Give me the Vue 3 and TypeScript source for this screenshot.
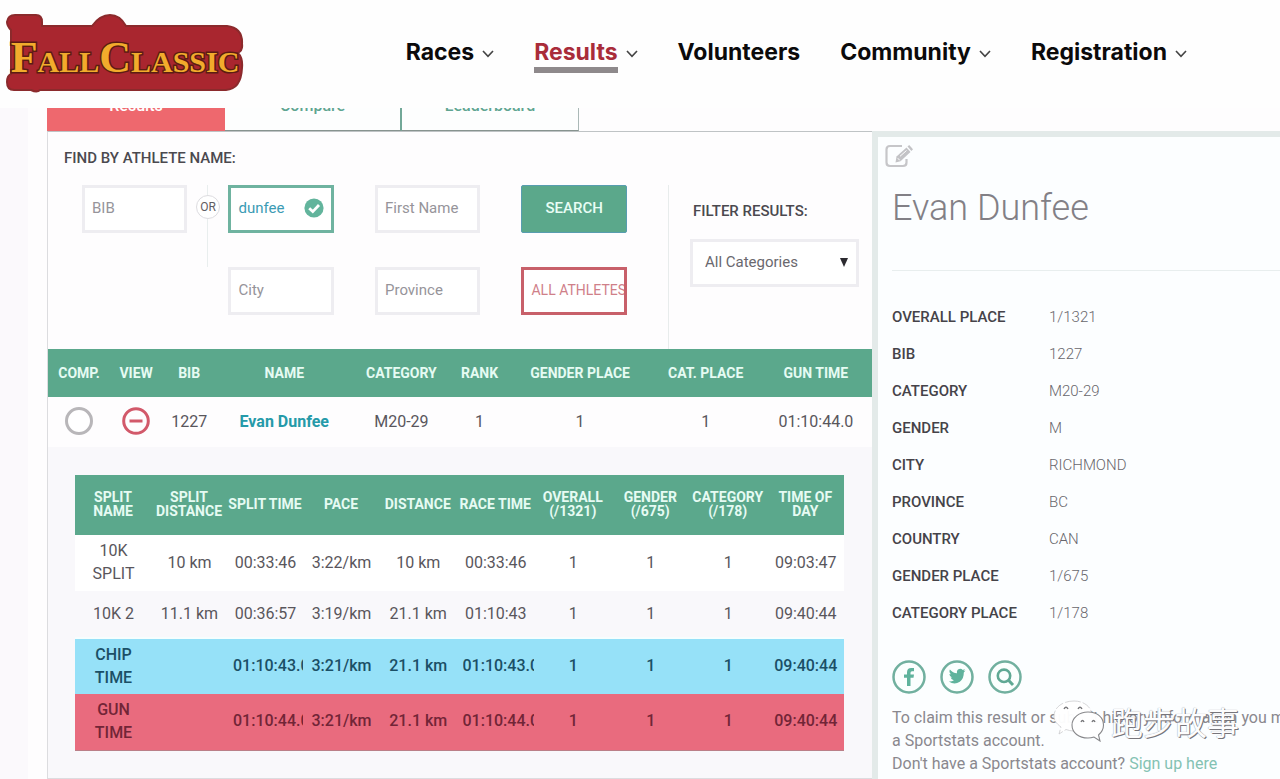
<script setup lang="ts">
import { ref } from 'vue'

interface NavItem { label: string; menu: boolean; active?: boolean }

const nav: NavItem[] = [
  { label: 'Races', menu: true },
  { label: 'Results', menu: true, active: true },
  { label: 'Volunteers', menu: false },
  { label: 'Community', menu: true },
  { label: 'Registration', menu: true },
]

const bib = ref('')
const lastName = ref('dunfee')
const firstName = ref('')
const city = ref('')
const province = ref('')
const category = ref('All Categories')
const compared = ref(false)
const expanded = ref(true)

const splitHeads: string[][] = [
  ['SPLIT', 'NAME'], ['SPLIT', 'DISTANCE'], ['SPLIT TIME'], ['PACE'], ['DISTANCE'],
  ['RACE TIME'], ['OVERALL', '(/1321)'], ['GENDER', '(/675)'], ['CATEGORY', '(/178)'], ['TIME OF', 'DAY'],
]

const splits: { kind: string; name: string[]; cells: string[] }[] = [
  { kind: 'plain', name: ['10K', 'SPLIT'], cells: ['10 km', '00:33:46', '3:22/km', '10 km', '00:33:46', '1', '1', '1', '09:03:47'] },
  { kind: 'alt', name: ['10K 2'], cells: ['11.1 km', '00:36:57', '3:19/km', '21.1 km', '01:10:43', '1', '1', '1', '09:40:44'] },
  { kind: 'chip', name: ['CHIP', 'TIME'], cells: ['', '01:10:43.0', '3:21/km', '21.1 km', '01:10:43.0', '1', '1', '1', '09:40:44'] },
  { kind: 'gun', name: ['GUN', 'TIME'], cells: ['', '01:10:44.0', '3:21/km', '21.1 km', '01:10:44.0', '1', '1', '1', '09:40:44'] },
]

const facts: [string, string][] = [
  ['OVERALL PLACE', '1/1321'],
  ['BIB', '1227'],
  ['CATEGORY', 'M20-29'],
  ['GENDER', 'M'],
  ['CITY', 'RICHMOND'],
  ['PROVINCE', 'BC'],
  ['COUNTRY', 'CAN'],
  ['GENDER PLACE', '1/675'],
  ['CATEGORY PLACE', '1/178'],
]
</script>

<template>
  <div class="page">
    <header class="top">
      <a href="#" class="logo" aria-label="Fall Classic">
        <svg width="238" height="80" viewBox="0 0 238 80">
          <path
            d="M9 1H30Q36 1 36 8V12H86Q94 1 104 1T120 12H221Q237 14 236 30Q237 36 232 39Q237 44 236 54Q235 75 220 76H34Q31 79 25 76H8Q1 76 1 68Q1 62 5 60V16Q1 12 1 8Q2 1 9 1Z"
            fill="#a9262f" stroke="#8b2a2c" stroke-width="2"
          />
          <text class="logo-text" x="119" y="58" text-anchor="middle"><tspan class="big">F</tspan>ALL<tspan class="big">C</tspan>LASSIC</text>
        </svg>
      </a>
      <nav class="nav">
        <a v-for="n in nav" :key="n.label" href="#" class="nav-item" :class="{ active: n.active }">
          <span class="nav-label">{{ n.label }}</span>
          <svg v-if="n.menu" width="12" height="8" viewBox="0 0 12 8"><path d="M1 1L6 6.4L11 1" fill="none" stroke="currentColor" stroke-width="1.6" /></svg>
        </a>
      </nav>
    </header>

    <div class="body">
      <main class="main">
        <div class="tabs">
          <button type="button" class="tab on">Results</button>
          <button type="button" class="tab">Compare</button>
          <button type="button" class="tab last">Leaderboard</button>
        </div>

        <section class="panel">
          <div class="filters">
            <form class="find" @submit.prevent>
              <h2 class="heading">FIND BY ATHLETE NAME:</h2>
              <div class="fields">
                <div class="cell">
                  <input v-model="bib" class="box" type="text" placeholder="BIB" aria-label="BIB">
                  <span class="or"><span class="or-dot">OR</span></span>
                </div>
                <div class="cell">
                  <input v-model="lastName" class="box filled" type="text" aria-label="Last Name">
                  <svg class="tick" width="20" height="20" viewBox="0 0 20 20">
                    <circle cx="10" cy="10" r="9.6" fill="#62b49c" />
                    <path d="M5.2 10.2L8.8 13.6L15 7" fill="none" stroke="#fff" stroke-width="2.8" />
                  </svg>
                </div>
                <div class="cell"><input v-model="firstName" class="box" type="text" placeholder="First Name" aria-label="First Name"></div>
                <div class="cell"><button type="submit" class="search">SEARCH</button></div>
                <div class="cell second"><input v-model="city" class="box" type="text" placeholder="City" aria-label="City"></div>
                <div class="cell"><input v-model="province" class="box" type="text" placeholder="Province" aria-label="Province"></div>
                <div class="cell"><button type="button" class="all">ALL ATHLETES</button></div>
              </div>
            </form>
            <div class="narrow">
              <label class="heading" for="category">FILTER RESULTS:</label>
              <div class="select-wrap">
                <select id="category" v-model="category" class="select">
                  <option>All Categories</option>
                </select>
                <svg class="caret" width="8" height="9" viewBox="0 0 8 9"><path d="M0 0H8L4 9Z" fill="#2c2a30" /></svg>
              </div>
            </div>
          </div>

          <table class="results">
            <colgroup>
              <col class="w62"><col class="w52"><col class="w54"><col class="w136"><col class="w98"><col class="w58"><col class="w143"><col class="w108"><col class="w112">
            </colgroup>
            <thead>
              <tr>
                <th>COMP.</th><th>VIEW</th><th>BIB</th><th>NAME</th><th>CATEGORY</th><th>RANK</th><th>GENDER PLACE</th><th>CAT. PLACE</th><th>GUN TIME</th>
              </tr>
            </thead>
            <tbody>
              <tr class="athlete">
                <td><input v-model="compared" class="ring" type="checkbox" aria-label="Compare Evan Dunfee"></td>
                <td>
                  <button type="button" class="toggle" aria-label="Toggle splits" @click="expanded = !expanded">
                    <svg width="28" height="28" viewBox="0 0 28 28" fill="none" stroke="#d2596a" stroke-width="3">
                      <circle cx="14" cy="14" r="12.3" /><path d="M7.5 14H20.5" />
                    </svg>
                  </button>
                </td>
                <td>1227</td>
                <td><a href="#" class="name">Evan Dunfee</a></td>
                <td>M20-29</td><td>1</td><td>1</td><td>1</td><td>01:10:44.0</td>
              </tr>
              <tr v-if="expanded">
                <td colspan="9" class="detail">
                  <table class="splits">
                    <colgroup><col span="4" class="w76"><col span="6"></colgroup>
                    <thead>
                      <tr>
                        <th v-for="(h, i) in splitHeads" :key="i"><span v-for="l in h" :key="l" class="line">{{ l }}</span></th>
                      </tr>
                    </thead>
                    <tbody>
                      <tr v-for="s in splits" :key="s.kind" :class="s.kind">
                        <td><span v-for="l in s.name" :key="l" class="line">{{ l }}</span></td>
                        <td v-for="(c, i) in s.cells" :key="i" :class="{ long: c.length > 9 }"><span class="line clip">{{ c }}</span></td>
                      </tr>
                    </tbody>
                  </table>
                </td>
              </tr>
            </tbody>
          </table>
        </section>
      </main>

      <aside class="card">
        <button type="button" class="edit" aria-label="Edit result">
          <svg width="28" height="24" viewBox="0 0 28 24">
            <path d="M17 2H5Q1.500 2 1.500 5.500V18.500Q1.500 22 5 22H18Q21.500 22 21.500 18.500V15" fill="none" stroke="#c6c6c9" stroke-width="2.200" />
            <path d="M10.500 18.500L11.500 12.500L21.500 3.500L25.500 8L15.500 17.200Z" fill="#c3c3c6" />
            <path d="M22.500 2.600L24.200 1.100L28 5.300L26.400 6.900Z" fill="#c3c3c6" />
            <path d="M12.800 14.200L14.700 16.300M15 12.300L21.500 6.500" stroke="#fff" stroke-width="1" />
          </svg>
        </button>
        <h1 class="title">Evan Dunfee</h1>
        <dl class="facts">
          <div v-for="f in facts" :key="f[0]" class="fact"><dt>{{ f[0] }}</dt><dd>{{ f[1] }}</dd></div>
        </dl>
        <div class="social">
          <a href="#" aria-label="Facebook">
            <svg width="34" height="34" viewBox="0 0 34 34">
              <circle class="rim" cx="17" cy="17" r="15.500" />
              <path d="M15 26V17.800H12V14.600H15V12.300Q15 8 19.300 8H22V11.200H20Q18.500 11.200 18.500 12.800V14.600H22L21.500 17.800H18.500V26Z" fill="#5fb39c" />
            </svg>
          </a>
          <a href="#" aria-label="Twitter">
            <svg width="34" height="34" viewBox="0 0 34 34">
              <circle class="rim" cx="17" cy="17" r="15.500" />
              <path d="M8.800 21.500Q11.800 21.800 13.900 20.200Q11.300 19.900 10.600 17.600H12.100Q9.500 16.700 9.400 13.900L10.900 14.300Q8.600 12.200 9.900 9.600Q12.800 13.100 17 13.300Q16.400 9.800 19.200 8.900Q21.200 8.300 22.800 9.900L25 9.100L23.500 11.100L25.500 10.600L23.800 12.500Q24 18.500 19.800 21.700Q14.500 25.200 8.800 21.500Z" fill="#5fb39c" />
            </svg>
          </a>
          <a href="#" aria-label="Search results">
            <svg width="34" height="34" viewBox="0 0 34 34">
              <circle class="rim" cx="17" cy="17" r="15.500" />
              <circle cx="16" cy="15.800" r="6.200" fill="none" stroke="#5fa994" stroke-width="2.600" />
              <path d="M20.500 20.300L25 25" stroke="#5fa994" stroke-width="3" />
            </svg>
          </a>
        </div>
        <div class="claim">
          <p>To claim this result or submit history information you must have</p>
          <p>a Sportstats account.</p>
          <p>Don't have a Sportstats account? <a href="#">Sign up here</a></p>
          <div class="mark">
            <svg width="54" height="42" viewBox="0 0 54 42">
              <path d="M21 1C9 1 1 8 1 16C1 21 4 24 8 27L6 34L13 29.500Q17 31 21 31C32 31 39 24 39 16C39 7 31 1 21 1Z" fill="#fff" fill-opacity="0.97" stroke="#c4c4c7" stroke-width="0.700" stroke-dasharray="9 2" />
              <path d="M35 12C26 12 19 18 19 25C19 33 26 38 35 38Q38 38 41 37L47 41L45.500 35C49 32 50.500 29 50.500 25C50.500 18 45 12 35 12Z" fill="#fff" fill-opacity="0.970" stroke="#88888b" stroke-width="1.100" />
              <path d="M11 9Q13 5.500 15 9M25 9Q27 5.500 29 9M28 22Q29.500 19 31 22M39 22Q40.500 19 42 22" fill="none" stroke="#77777a" stroke-width="1.400" />
            </svg>
            <span>跑步故事</span>
          </div>
        </div>
      </aside>
    </div>
  </div>
</template>

<style>
body {
  margin: 0;
  background: #fefdfe;
}
</style>

<style scoped>
.page {
  min-height: 100vh;
  overflow: hidden;
  font-family: Roboto, "Noto Sans CJK SC", sans-serif;
  font-size: 16px;
  color: #59565c;
  box-sizing: border-box;
}
.page *, .page *::before {
  box-sizing: border-box;
}
button, input, select {
  font-family: inherit;
  margin: 0;
}
a {
  text-decoration: none;
}
.top {
  position: relative;
  z-index: 2;
  height: 108px;
  background: #fefefe;
  display: flex;
  justify-content: space-between;
  align-items: flex-start;
  padding: 14px 93px 0 6px;
}
.logo svg {
  display: block;
}
.logo-text {
  font-family: "Liberation Serif", serif;
  font-weight: 700;
  font-size: 30px;
  fill: #f2ab2c;
  stroke: #5c1d12;
  stroke-width: 3px;
  paint-order: stroke;
}
.big {
  font-size: 44px;
}
.nav {
  display: flex;
  gap: 40px;
  padding-top: 21px;
}
.nav-item {
  display: flex;
  align-items: center;
  gap: 8px;
  height: 34px;
  font: 700 23px/34px Inter, sans-serif;
  color: #0b0a0b;
}
.nav-item svg {
  margin-top: 4px;
  color: #444;
}
.nav-label {
  border-bottom: 6px solid transparent;
  height: 38px;
  margin-top: 10px;
  line-height: 34px;
  margin-bottom: 6px;
}
.active .nav-label {
  color: #a92c3a;
  border-color: #8e898b;
}
.body {
  display: grid;
  grid-template-columns: minmax(0, 825fr) minmax(0, 408fr);
  margin-left: 28px;
  padding-left: 19px;
  box-shadow: -28px 0 0 #fbf9fc;
}
.tabs {
  display: flex;
  margin-top: -25px;
  height: 48px;
}
.tab {
  width: 177px;
  padding: 0 0 3px;
  font-size: 16px;
  font-weight: 500;
  color: #5fa591;
  background: #fdfefe;
  border: 0;
  border-right: 2px solid #72a898;
  border-bottom: 1px solid #87938f;
}
.tab.on {
  width: 178px;
  color: #fff;
  background: #ee686e;
  border: 0;
}
.tab.last {
  border-right: 1px solid #aab9b7;
}
.panel {
  border: 1px solid #dcdcdf;
  border-top-color: #bfc3c5;
  border-right: 0;
  background: #fefdfe;
}
.filters {
  display: flex;
  height: 217px;
}
.find {
  width: 75.24%;
  padding: 16px 41px 0 16px;
}
.heading {
  display: block;
  margin: 0;
  font-size: 15px;
  line-height: 20px;
  font-weight: 500;
  color: #4b494f;
}
.fields {
  display: grid;
  grid-template-columns: repeat(4, minmax(0, 1fr));
  gap: 34px 41px;
  margin: 17px 0 0 18px;
}
.cell {
  position: relative;
  height: 48px;
}
.second {
  grid-column: 2;
}
.box {
  display: block;
  width: 100%;
  height: 48px;
  padding: 0 7px 2px;
  border: 3px solid #eeedf1;
  background: #fff;
  font-size: 15px;
  color: #3b9bb4;
  border-radius: 0;
  outline: none;
}
.box::placeholder {
  color: #96949a;
  opacity: 1;
}
.filled {
  border-color: #6fb3a0;
  padding-right: 30px;
}
.tick {
  position: absolute;
  right: 10px;
  top: 13px;
}
.or {
  position: absolute;
  left: 100%;
  top: 0;
  width: 41px;
  height: 82px;
  display: flex;
  justify-content: center;
  padding-top: 10px;
  background: linear-gradient(#e9eeee, #e9eeee) center / 1px 100% no-repeat;
}
.or-dot {
  width: 24px;
  height: 24px;
  border: 1px solid #dddce0;
  border-radius: 50%;
  background: #fff;
  font-size: 12px;
  line-height: 22px;
  text-align: center;
  color: #5f5d63;
}
.search, .all {
  display: block;
  width: 100%;
  height: 48px;
  padding: 0 7px 2px;
  font-size: 15px;
  white-space: nowrap;
  overflow: hidden;
}
.search {
  border: 1px solid #589db0;
  border-radius: 2px;
  background: #5ba88b;
  color: #e8fdf5;
  font-weight: 500;
}
.all {
  border: 3px solid #c8606a;
  background: #fff;
  color: #cf8089;
  font-size: 14px;
  text-align: left;
}
.narrow {
  flex: 1;
  margin-top: 53px;
  padding: 16px 13px 0 21px;
  border-left: 1px solid #e8ecec;
}
.narrow .heading {
  padding-left: 3px;
}
.select-wrap {
  position: relative;
  margin-top: 18px;
}
.select {
  display: block;
  width: 100%;
  height: 48px;
  padding: 0 12px 2px;
  border: 3px solid #eeedf1;
  border-radius: 0;
  appearance: none;
  background: #fff;
  font-size: 15px;
  color: #6a686e;
}
.caret {
  position: absolute;
  right: 11px;
  top: 19px;
  pointer-events: none;
}
table {
  width: 100%;
  table-layout: fixed;
  border-collapse: collapse;
}
th, td {
  padding: 0;
  text-align: center;
}
th {
  height: 48px;
  background: #5ba88c;
  color: #e6fbf3;
  font-size: 14px;
  line-height: 14px;
  font-weight: 700;
  white-space: nowrap;
}
.w62 { width: 62px; }
.w52 { width: 52px; }
.w54 { width: 54px; }
.w76 { width: 76px; }
.w136 { width: 136px; }
.w98 { width: 98px; }
.w58 { width: 58px; }
.w143 { width: 143px; }
.w108 { width: 108px; }
.w112 { width: 112px; }
.athlete td {
  height: 50px;
  padding-bottom: 2px;
  white-space: nowrap;
}
.ring {
  display: block;
  appearance: none;
  width: 28px;
  height: 28px;
  margin: 0 auto;
  border: 3px solid #b8b6b9;
  border-radius: 50%;
  background: #fff;
}
.ring:checked {
  background: #5ba88c;
}
.toggle {
  display: block;
  margin: 0 auto;
  padding: 0;
  border: 0;
  background: none;
}
.toggle svg, .edit svg {
  display: block;
}
.name {
  font-weight: 700;
  color: #259aa9;
}
.detail {
  background: #f9f8fb;
  padding: 28px 28px 27px 27px;
}
.splits th {
  height: 60px;
  padding-bottom: 2px;
}
.splits td {
  height: 56px;
  padding: 0 1px 2px 2px;
  line-height: 23px;
}
.splits .plain td {
  background: #fff;
}
.splits .alt td {
  height: 47px;
  border-bottom: 2px solid #f6fefe;
}
.splits .long {
  padding: 0 0 2px 6px;
}
.chip, .gun {
  font-weight: 500;
}
.chip {
  background: #96e1f8;
  color: #1b4f66;
}
.gun {
  background: #e96b7e;
  color: #722537;
  border-bottom: 1px solid #bb7f88;
}
.line {
  display: block;
}
.clip {
  overflow: hidden;
  white-space: nowrap;
}
.card {
  margin-top: 23px;
  padding: 7px 0 0 7px;
  border: 6px solid #e3eae9;
  border-right: 0;
  border-bottom: 0;
  background: #fcfeff;
  white-space: nowrap;
  min-width: 0;
}
.edit {
  display: block;
  padding: 0;
  border: 0;
  background: none;
}
.title {
  margin: 0 0 0 7px;
  padding: 18px 0 40px;
  border-bottom: 1px solid #e8eeee;
  font-size: 36px;
  line-height: 44px;
  font-weight: 300;
  color: #828086;
}
.facts {
  margin: 28px 0 0 7px;
  font-size: 15px;
  line-height: 37px;
}
.fact {
  display: flex;
}
dt {
  width: 157px;
  font-weight: 500;
  color: #454349;
}
dd {
  margin: 0;
  font-weight: 300;
  color: #68666c;
}
.social {
  display: flex;
  gap: 14px;
  margin: 28px 0 0 7px;
}
.social svg {
  display: block;
}
.rim {
  fill: #fbfffe;
  stroke: #71b09f;
  stroke-width: 2.500px;
}
.claim {
  position: relative;
  margin: 12px 0 0 7px;
  font-size: 16px;
  line-height: 23px;
  color: #8a888e;
}
.claim p {
  margin: 0;
}
.claim a {
  color: #84c2b3;
}
.mark {
  position: absolute;
  left: 161px;
  top: -6px;
  display: flex;
  align-items: center;
}
.mark span {
  font: 400 32px/40px "Noto Sans CJK SC", sans-serif;
  color: #fdfdfe;
  text-shadow: 1px 1px 0 #77757b, 0 0 1px #8a888e;
  margin-left: 4px;
}
</style>
